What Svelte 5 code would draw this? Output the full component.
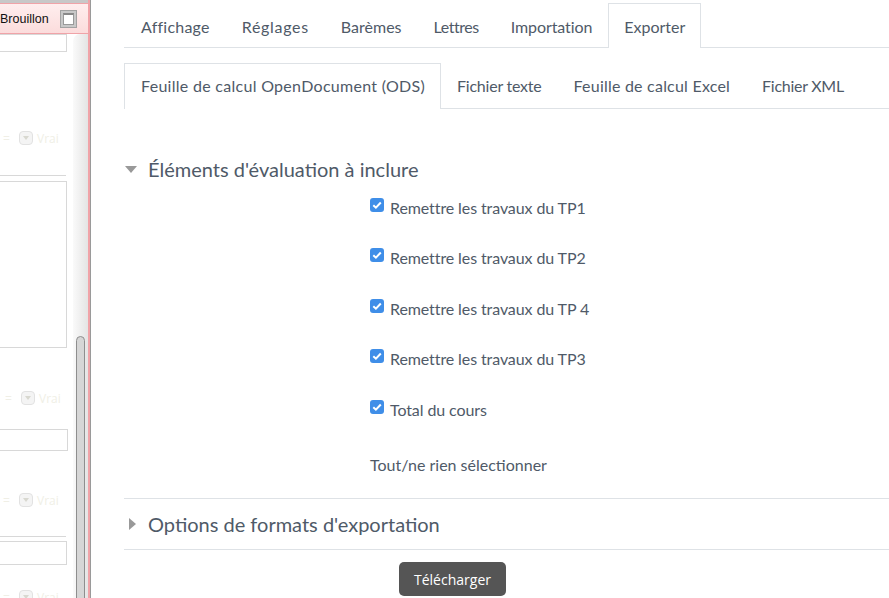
<script>
    // ecart de lettres par libelle pour coller aux largeurs de la police d'origine
    const topTabs = [
        { t: "Affichage", ls: 0.22 },
        { t: "Réglages", ls: 0.7 },
        { t: "Barèmes", ls: 0 },
        { t: "Lettres", ls: -0.45 },
        { t: "Importation", ls: -0.09 },
        { t: "Exporter", ls: 0 }
    ];
    const subTabs = [
        { t: "Feuille de calcul OpenDocument (ODS)", ls: 0.29 },
        { t: "Fichier texte", ls: -0.23 },
        { t: "Feuille de calcul Excel", ls: 0.22 },
        { t: "Fichier XML", ls: -0.27 }
    ];
    const items = [
        "Remettre les travaux du TP1",
        "Remettre les travaux du TP2",
        "Remettre les travaux du TP 4",
        "Remettre les travaux du TP3",
        "Total du cours"
    ];
</script>

{#snippet vrai(cls)}
    <div class="vrai {cls}">
        <span class="egal">=</span>
        <span class="pastille">
            <svg width="8" height="6" viewBox="0 0 8 6"><path d="M1 1h6L4 5z" fill="#d8d8d0" /></svg>
        </span>
        <span>Vrai</span>
    </div>
{/snippet}

<div class="page">
    <aside class="fenetre">
        <div class="entete">
            <span class="titre">Brouillon</span>
            <span class="agrandir"><span></span></span>
        </div>
        <div class="corps">
            <div class="contenu">
                <div class="champ h1"></div>
                {@render vrai("v1")}
                <hr />
                <div class="champ h2"></div>
                {@render vrai("v2")}
                <div class="champ h3"></div>
                {@render vrai("v3")}
                <hr class="r2" />
                <div class="champ h4"></div>
                {@render vrai("v4")}
            </div>
            <div class="defilement"><div class="curseur"></div></div>
        </div>
    </aside>

    <main>
        <nav class="onglets haut">
            {#each topTabs as o}
                <span class="onglet" class:actif={o.t === "Exporter"} style:letter-spacing="{o.ls}px">{o.t}</span>
            {/each}
        </nav>
        <nav class="onglets bas">
            {#each subTabs as o, i}
                <span class="onglet" class:actif={i === 0} style:letter-spacing="{o.ls}px">{o.t}</span>
            {/each}
        </nav>

        <h3 class="section premiere">
            <svg width="12" height="7" viewBox="0 0 12 7"><path d="M0 0h12L6 7z" fill="#999" /></svg>
            Éléments d'évaluation à inclure
        </h3>
        <div class="liste">
            {#each items as it}
                <label class="ligne">
                    <span class="case">
                        <svg width="14" height="14" viewBox="0 0 14 14"><path d="M3.3 7.2l2.6 2.5 4.9-5.2" fill="none" stroke="#fff" stroke-width="2" /></svg>
                    </span>
                    {it}
                </label>
            {/each}
            <div class="tout">Tout/ne rien sélectionner</div>
        </div>

        <h3 class="section seconde">
            <svg width="7" height="12" viewBox="0 0 7 12"><path d="M0 0v12l7-6z" fill="#999" /></svg>
            Options de formats d'exportation
        </h3>
        <div class="actions"><button>Télécharger</button></div>
    </main>
</div>

<style>
    :global(body) { margin: 0; background: #fff; overflow: hidden; }

    .page { display: flex; width: 889px; height: 598px; overflow: hidden; font-family: Lato, sans-serif; color: #4f5a68; }

    /* fenetre de gauche, coupee par le bord */
    .fenetre { width: 88px; height: 598px; flex: none; border-right: 2px solid #f0a3a8; box-shadow: 1px 0 0 #9a9a9a; margin-right: 1px; background: #fff; }
    .entete { height: 29px; margin-top: 3px; border-top: 1px solid #f0a3a8; border-bottom: 1px solid #f0a3a8; background: linear-gradient(#ffeeee, #fbdcdc); display: flex; align-items: center; justify-content: flex-end; padding-right: 11px; gap: 11px; box-shadow: 0 -3px 0 #c8c8c8; }
    .titre { font: 12.5px "Liberation Sans", sans-serif; color: #111; white-space: nowrap; }
    .agrandir { width: 18px; height: 18px; box-sizing: border-box; background: #c8c8c8; border: 1px solid #a2a2a2; padding: 2px; display: block; }
    .agrandir span { display: block; height: 100%; box-sizing: border-box; border: 1px solid #999; border-top: 2px solid #888; background: #fff; }

    .corps { display: flex; height: 564px; overflow: hidden; }
    .contenu { width: 73px; flex: none; overflow: hidden; }
    .champ { width: 68px; margin-left: -1px; box-sizing: border-box; border: 1px solid #d8d8d8; border-left: none; }
    .h1 { height: 18px; }
    .h2 { height: 167px; margin-top: 5px; }
    .h3 { height: 22px; margin-top: 23px; width: 69px; }
    .h4 { height: 24px; margin-top: 4px; }
    hr { border: none; border-top: 1px solid #d8d8d8; width: 66px; margin: 0; margin-top: 29px; }
    hr.r2 { margin-top: 28px; }
    .vrai { display: flex; align-items: center; gap: 11px; height: 16px; margin-top: 78px; font: 12px "Open Sans", sans-serif; color: #f0efe6; white-space: nowrap; padding-left: 3px; }
    .egal { width: 5px; }
    .pastille { width: 12px; height: 12px; margin-right: -7px; border: 1px solid #e2e2e2; border-radius: 4px; background: #f4f4f4; display: flex; align-items: center; justify-content: center; }
    .v2 { margin-top: 42px; padding-left: 5px; }
    .v3 { margin-top: 41px; }
    .v4 { margin-top: 24px; }

    .defilement { width: 15px; border-top-left-radius: 7px; background: linear-gradient(90deg, #fafafa, #e4e4e4); padding-left: 3px; box-sizing: border-box; padding-top: 302px; }
    .curseur { width: 9px; height: 300px; box-sizing: border-box; border: 1px solid #8e8e8e; border-radius: 5px 5px 0 0; background: #d6d6d6; }

    main { width: 765px; margin-left: 33px; flex: none; }
    .onglets { display: flex; border-bottom: 1px solid #dee2e6; font-size: 16px; height: 44px; }
    .haut { margin-top: 3px; }
    .bas { margin-top: 15px; height: 45px; }
    .onglet { padding: 0 15px; border: 1px solid transparent; border-bottom: none; line-height: 46px; height: 45px; white-space: nowrap; box-sizing: border-box; }
    .onglet:first-child { padding-left: 16px; }
    .bas .onglet { height: 46px; line-height: 44px; }
    .actif { border-color: #dee2e6; background: #fff; }

    .section { margin: 0; font-weight: 400; font-size: 20px; display: flex; align-items: center; gap: 11px; white-space: nowrap; }
    .premiere { margin-top: 46px; height: 28px; padding-left: 1px; }
    .seconde { margin-top: 11px; height: 50px; padding-left: 5px; gap: 12px; border-top: 1px solid #dee2e6; border-bottom: 1px solid #dee2e6; }

    .liste { padding-left: 246px; padding-top: 9px; height: 304px; box-sizing: border-box; }
    .ligne { display: flex; align-items: center; gap: 6px; height: 50.5px; font-size: 16px; letter-spacing: -0.1px; padding-bottom: 20px; box-sizing: border-box; }
    .case { width: 14px; height: 14px; border-radius: 3px; background: #3f8ee8; display: block; margin-bottom: 5px; }
    .case svg { display: block; }
    .tout { font-size: 16px; padding-top: 10px; }

    .actions { padding-left: 275px; padding-top: 12px; }
    button { width: 107px; height: 34px; border: none; border-radius: 5px; background: #555; color: #fff; font: 14px "Open Sans", sans-serif; padding: 0; }
</style>
